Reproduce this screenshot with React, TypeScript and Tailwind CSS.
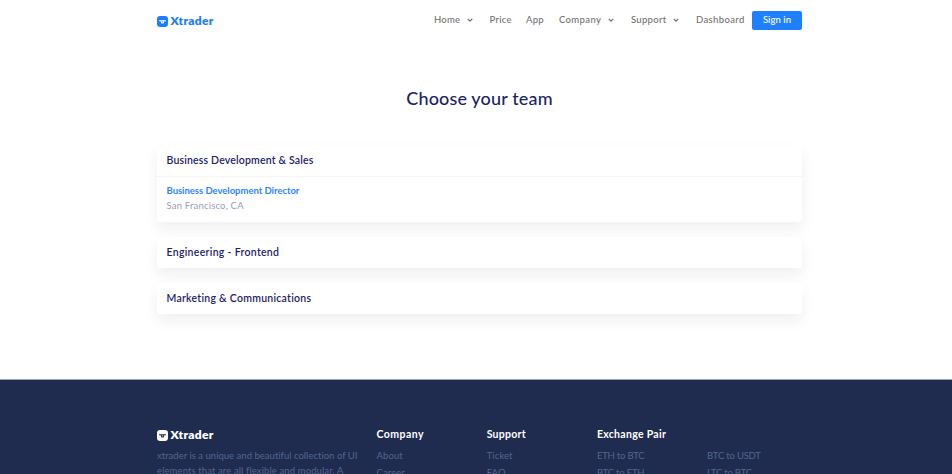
type NavItem = { label: string; width: string; tracking: string; menu?: boolean };

const nav: NavItem[] = [
  { label: 'Home', width: 'w-[55.5px]', tracking: 'tracking-[0.2px]', menu: true },
  { label: 'Price', width: 'w-[36.5px]', tracking: 'tracking-[0.25px]' },
  { label: 'App', width: 'w-[33px]', tracking: 'tracking-[0.25px]' },
  { label: 'Company', width: 'w-[72px]', tracking: 'tracking-[0.36px]', menu: true },
  { label: 'Support', width: 'w-[65px]', tracking: 'tracking-[0.28px]', menu: true },
  { label: 'Dashboard', width: 'w-[56px]', tracking: 'tracking-[0.36px]' },
];

function Chevron() {
  return (
    <svg className="mr-[17px] h-[4px] w-[6px]" viewBox="0 0 6 4" fill="none" stroke="currentColor" strokeWidth="1.3">
      <path d="M0.7 0.9 3 3.1 5.3 0.9" />
    </svg>
  );
}

function Logo({ light = false }: { light?: boolean }) {
  const ink = light ? '#1f2c4f' : '#ffffff';
  return (
    <div className={`flex h-[14px] items-center gap-[2.5px] ${light ? 'text-white' : 'text-[#1d7dfb]'}`}>
      <svg className="h-[11px] w-[11px]" viewBox="0 0 11 11">
        <rect width="11" height="11" rx="3.2" fill="currentColor" />
        <path d="M2 4.2H9V5.3H7.4L6.6 7.4H4.4L3.6 5.3H2Z" fill={ink} />
        <path d="M4.5 5.4H6.5L5.5 6.5Z" fill="currentColor" />
      </svg>
      <span className="text-[12px] leading-[14px] font-extrabold tracking-[0.32px]">Xtrader</span>
    </div>
  );
}

const card = 'rounded-[3px] bg-white shadow-[0_7px_14px_rgba(31,35,60,0.065)]';
const cardTitle = 'flex h-[31px] items-center pl-[9.5px] text-[10.5px] font-semibold text-[#1c2465]';

const columns = [
  { title: 'Company', tracking: 'tracking-[0.46px]', links: ['About', 'Career'] },
  { title: 'Support', tracking: 'tracking-[0.25px]', links: ['Ticket', 'FAQ'] },
  { title: 'Exchange Pair', tracking: 'tracking-[0.3px]', links: ['ETH to BTC', 'BTC to ETH'] },
  { title: '', tracking: '', links: ['BTC to USDT', 'LTC to BTC'] },
];

export default function App() {
  return (
    <div className="flex h-[474px] w-[952px] flex-col overflow-hidden bg-white font-['Lato',sans-serif]">
      <header className="ml-[157px] flex h-[40px] w-[645px] shrink-0 items-center justify-between">
        <div className="pt-[2px]">
          <Logo />
        </div>
        <div className="flex items-center">
          <nav className="flex items-center text-[9.5px] leading-[14px] font-medium text-[#727272]">
            {nav.map((n) => (
              <a key={n.label} className={`flex items-center justify-between ${n.width} ${n.tracking}`}>
                {n.label}
                {n.menu && <Chevron />}
              </a>
            ))}
          </nav>
          <button className="h-[19px] w-[50px] rounded-[2px] bg-[#1f80ff] text-[9.5px] leading-[18px] font-medium tracking-[0.05px] text-white">
            Sign in
          </button>
        </div>
      </header>

      <main className="ml-[157px] w-[645px] flex-1">
        <h1 className="mt-[45px] text-center text-[18px] leading-[26px] font-medium tracking-[0.15px] text-[#1c2465]">
          Choose your team
        </h1>
        <div className="mt-[33.5px] flex flex-col gap-[15px]">
          <section className={card}>
            <h2 className={`${cardTitle} pt-[1px] tracking-[0.17px]`}>Business Development &amp; Sales</h2>
            <div className="flex h-[46.5px] flex-col border-t border-[#f4f4f6] pt-[6.5px] pl-[9.5px]">
              <a className="text-[9.5px] leading-[15px] font-bold tracking-[-0.03px] text-[#2f85fa]">
                Business Development Director
              </a>
              <span className="text-[9.5px] leading-[15px] tracking-[0.19px] text-[#9c9cba]">San Francisco, CA</span>
            </div>
          </section>
          <section className={card}>
            <h2 className={`${cardTitle} tracking-[0.3px]`}>Engineering - Frontend</h2>
          </section>
          <section className={card}>
            <h2 className={`${cardTitle} tracking-[0.26px]`}>Marketing &amp; Communications</h2>
          </section>
        </div>
      </main>

      <footer className="flex h-[95px] shrink-0 border-t border-[#9aa1b0] bg-[#1f2c4f] pl-[157px]">
        <div className="w-[219.5px] shrink-0 pt-[48px]">
          <Logo light />
          <p className="mt-[5.5px] text-[9.5px] leading-[15px] whitespace-nowrap text-[#536590]">
            <span className="block tracking-[0.02px]">xtrader is a unique and beautiful collection of UI</span>
            <span className="block tracking-[0.11px]">elements that are all flexible and modular. A</span>
          </p>
        </div>
        {columns.map((c, i) => (
          <div key={i} className="w-[110.2px] shrink-0 pt-[47px]">
            <h3 className={`h-[14px] text-[10.5px] leading-[14px] font-bold text-white ${c.tracking}`}>{c.title}</h3>
            <ul className="mt-[5.5px] text-[9.5px] leading-[17px] text-[#536590]">
              {c.links.map((l) => (
                <li key={l} className={i > 1 ? 'tracking-[-0.21px]' : 'tracking-[0.1px]'}>{l}</li>
              ))}
            </ul>
          </div>
        ))}
      </footer>
    </div>
  );
}
